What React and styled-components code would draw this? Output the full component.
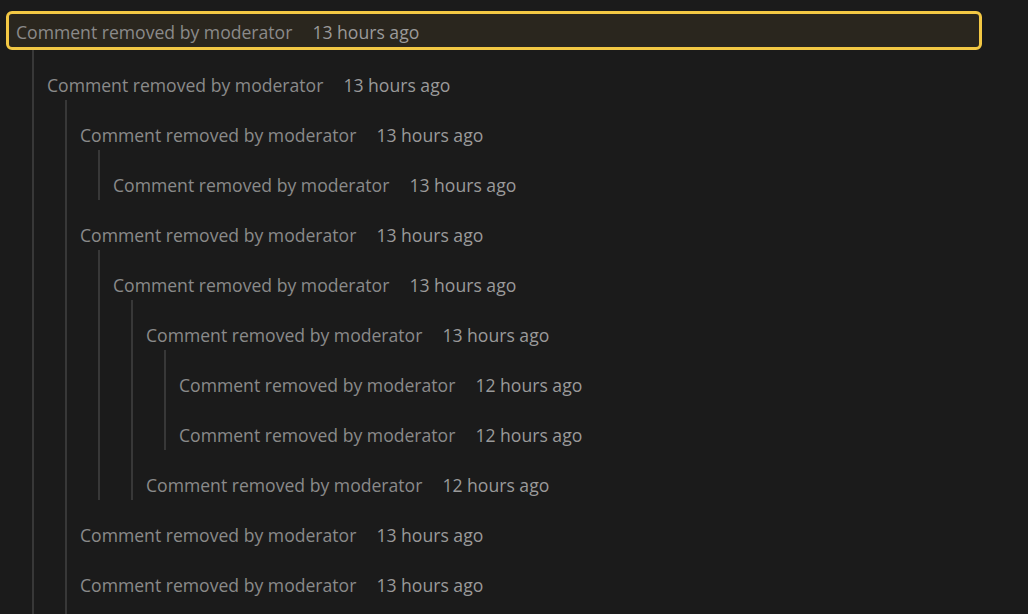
import React from 'react';
import styled, { createGlobalStyle } from 'styled-components';

const GlobalStyle = createGlobalStyle`
  html, body {
    margin: 0;
    padding: 0;
    background: #1b1b1b;
    overflow: hidden;
    height: 100%;
  }
`;

const StyledThread = styled.div`
  padding: 11px 46px 0 6px;
  font-family: 'Open Sans', 'Noto Sans', sans-serif;
  font-size: 17.6px;
  color: #8a8a8a;
`;

const StyledHeader = styled.div`
  display: flex;
  align-items: center;
  gap: 20px;
  white-space: nowrap;
  box-sizing: border-box;
  height: 50px;
  padding-top: 20px;
  line-height: 24px;

  &.highlight {
    height: 39px;
    padding: 3px 7px 0;
    border: 3px solid #f3c844;
    border-radius: 6px;
    background: #2a261e;
  }

  .meta {
    color: #9a9a9a;
  }
`;

const StyledChildren = styled.div`
  margin-left: ${({ $offset }) => $offset}px;
  border-left: 2px solid #383838;
  padding-left: 13px;
  padding-bottom: ${({ $open }) => ($open ? '24px' : '0')};
`;

const thread = {
  time: '13 hours ago',
  highlight: true,
  open: true,
  replies: [
    {
      time: '13 hours ago',
      open: true,
      replies: [
        { time: '13 hours ago', replies: [{ time: '13 hours ago' }] },
        {
          time: '13 hours ago',
          replies: [
            {
              time: '13 hours ago',
              replies: [
                {
                  time: '13 hours ago',
                  replies: [{ time: '12 hours ago' }, { time: '12 hours ago' }],
                },
                { time: '12 hours ago' },
              ],
            },
          ],
        },
        { time: '13 hours ago' },
        { time: '13 hours ago' },
      ],
    },
  ],
};

const Comment = ({ node, depth }) => (
  <div>
    <StyledHeader className={node.highlight ? 'highlight' : ''}>
      <span>Comment removed by moderator</span>
      <span className="meta">{node.time}</span>
    </StyledHeader>
    {node.replies && (
      <StyledChildren $offset={depth === 0 ? 26 : 18} $open={node.open}>
        {node.replies.map((r, i) => (
          <Comment key={i} node={r} depth={depth + 1} />
        ))}
      </StyledChildren>
    )}
  </div>
);

const App = () => (
  <>
    <GlobalStyle />
    <StyledThread>
      <Comment node={thread} depth={0} />
    </StyledThread>
  </>
);

export default App;
